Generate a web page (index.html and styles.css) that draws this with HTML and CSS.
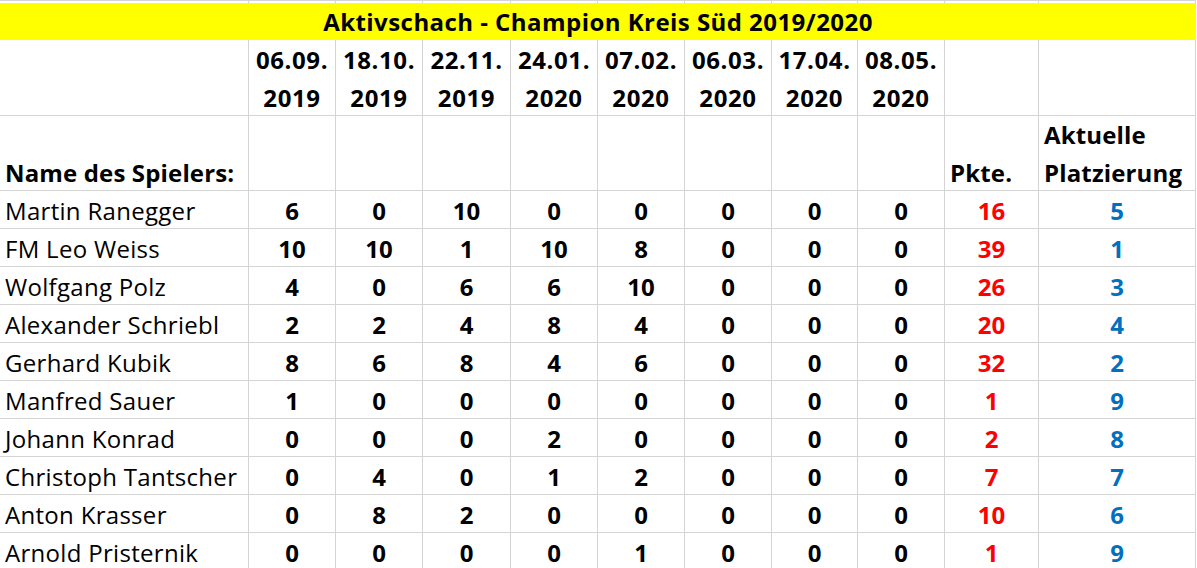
FILE: index.html
```html
<!DOCTYPE html>
<html lang="de">
<head>
<meta charset="utf-8">
<title>Aktivschach - Champion Kreis Süd 2019/2020</title>
<link rel="stylesheet" href="styles.css">
</head>
<body>
<div class="sheet">
  <div class="c strip"></div><div class="c strip"></div><div class="c strip"></div><div class="c strip"></div><div class="c strip"></div><div class="c strip"></div><div class="c strip"></div><div class="c strip"></div><div class="c strip"></div><div class="c strip"></div><div class="c strip"></div>

  <div class="title">Aktivschach - Champion Kreis Süd 2019/2020</div>

  <div class="c dates"></div>
  <div class="c dates">06.09.<br>2019</div>
  <div class="c dates">18.10.<br>2019</div>
  <div class="c dates">22.11.<br>2019</div>
  <div class="c dates">24.01.<br>2020</div>
  <div class="c dates">07.02.<br>2020</div>
  <div class="c dates">06.03.<br>2020</div>
  <div class="c dates">17.04.<br>2020</div>
  <div class="c dates">08.05.<br>2020</div>
  <div class="c dates"></div>
  <div class="c dates"></div>

  <div class="c head name"><span class="t">Name des Spielers:</span></div>
  <div class="c head"></div><div class="c head"></div><div class="c head"></div><div class="c head"></div><div class="c head"></div><div class="c head"></div><div class="c head"></div><div class="c head"></div>
  <div class="c head name"><span class="t">Pkte.</span></div>
  <div class="c head name"><span class="t">Aktuelle<br>Platzierung</span></div>

  <div class="c row name">Martin Ranegger</div><div class="c row">6</div><div class="c row">0</div><div class="c row">10</div><div class="c row">0</div><div class="c row">0</div><div class="c row">0</div><div class="c row">0</div><div class="c row">0</div><div class="c row pts">16</div><div class="c row rank">5</div>
  <div class="c row name">FM Leo Weiss</div><div class="c row">10</div><div class="c row">10</div><div class="c row">1</div><div class="c row">10</div><div class="c row">8</div><div class="c row">0</div><div class="c row">0</div><div class="c row">0</div><div class="c row pts">39</div><div class="c row rank">1</div>
  <div class="c row name">Wolfgang Polz</div><div class="c row">4</div><div class="c row">0</div><div class="c row">6</div><div class="c row">6</div><div class="c row">10</div><div class="c row">0</div><div class="c row">0</div><div class="c row">0</div><div class="c row pts">26</div><div class="c row rank">3</div>
  <div class="c row name">Alexander Schriebl</div><div class="c row">2</div><div class="c row">2</div><div class="c row">4</div><div class="c row">8</div><div class="c row">4</div><div class="c row">0</div><div class="c row">0</div><div class="c row">0</div><div class="c row pts">20</div><div class="c row rank">4</div>
  <div class="c row name">Gerhard Kubik</div><div class="c row">8</div><div class="c row">6</div><div class="c row">8</div><div class="c row">4</div><div class="c row">6</div><div class="c row">0</div><div class="c row">0</div><div class="c row">0</div><div class="c row pts">32</div><div class="c row rank">2</div>
  <div class="c row name">Manfred Sauer</div><div class="c row">1</div><div class="c row">0</div><div class="c row">0</div><div class="c row">0</div><div class="c row">0</div><div class="c row">0</div><div class="c row">0</div><div class="c row">0</div><div class="c row pts">1</div><div class="c row rank">9</div>
  <div class="c row name">Johann Konrad</div><div class="c row">0</div><div class="c row">0</div><div class="c row">0</div><div class="c row">2</div><div class="c row">0</div><div class="c row">0</div><div class="c row">0</div><div class="c row">0</div><div class="c row pts">2</div><div class="c row rank">8</div>
  <div class="c row name">Christoph Tantscher</div><div class="c row">0</div><div class="c row">4</div><div class="c row">0</div><div class="c row">1</div><div class="c row">2</div><div class="c row">0</div><div class="c row">0</div><div class="c row">0</div><div class="c row pts">7</div><div class="c row rank">7</div>
  <div class="c row name">Anton Krasser</div><div class="c row">0</div><div class="c row">8</div><div class="c row">2</div><div class="c row">0</div><div class="c row">0</div><div class="c row">0</div><div class="c row">0</div><div class="c row">0</div><div class="c row pts">10</div><div class="c row rank">6</div>
  <div class="c row name">Arnold Pristernik</div><div class="c row">0</div><div class="c row">0</div><div class="c row">0</div><div class="c row">0</div><div class="c row">1</div><div class="c row">0</div><div class="c row">0</div><div class="c row">0</div><div class="c row pts">1</div><div class="c row rank">9</div>
</div>
</body>
</html>
```
FILE: styles.css
```css
html, body {
  margin: 0;
  padding: 0;
  background: #ffffff;
  overflow: hidden;
}

body {
  font-family: "Open Sans", Lato, sans-serif;
  font-size: 24px;
  color: #000000;
}

.sheet {
  display: grid;
  grid-template-columns: 249px 87px 87px 88px 87px 87px 87px 86px 87px 94px 157px;
  grid-template-rows: 3px 37px 76px 75px repeat(10, 38px);
  width: 1196px;
}

.c {
  box-sizing: border-box;
  border-right: 1px solid #d4d4d4;
  border-bottom: 1px solid #d4d4d4;
  display: flex;
  align-items: flex-end;
  justify-content: center;
  text-align: center;
  font-weight: 700;
  white-space: nowrap;
}

.strip {
  border-top: 1px solid #d4d4d4;
  border-bottom: none;
}

.title {
  grid-column: 1 / -1;
  background: #ffff00;
  display: flex;
  align-items: center;
  justify-content: center;
  font-weight: 700;
  letter-spacing: 0.45px;
}

.dates {
  align-items: flex-start;
  line-height: 38px;
  padding-top: 1px;
  letter-spacing: 0.6px;
}

.head {
  line-height: 38px;
  letter-spacing: 0.15px;
}

.head .t {
  margin-bottom: -2px;
}

.row {
  line-height: 30px;
  padding-bottom: 2px;
}

.name {
  justify-content: flex-start;
  text-align: left;
  padding-left: 5px;
}

.row.name {
  font-weight: 400;
  letter-spacing: 0.3px;
}

.pts {
  color: #ff0000;
}

.rank {
  color: #0070c0;
}
```
